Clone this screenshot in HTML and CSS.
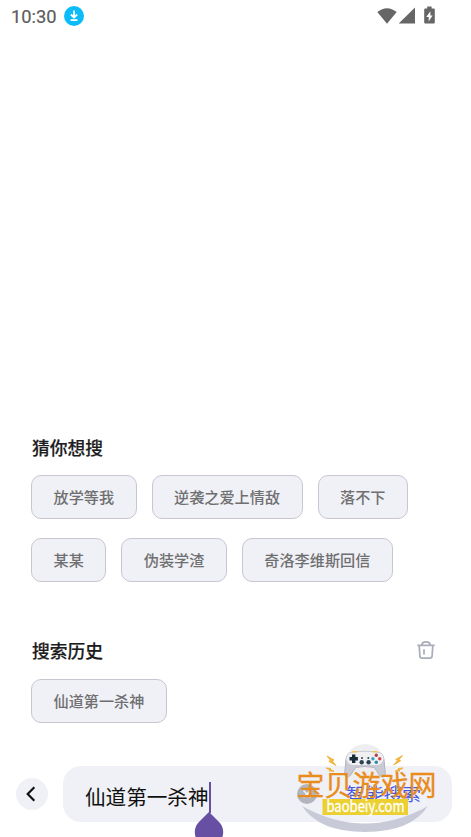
FILE: index.html
```html
<!DOCTYPE html>
<html lang="zh-CN">
<head>
<meta charset="utf-8">
<meta name="viewport" content="width=device-width, initial-scale=1">
<title>搜索</title>
<link rel="stylesheet" href="styles.css">
</head>
<body>
<div class="screen">
  <header class="status">
    <span class="clock">10:30</span>
    <svg class="download" viewBox="0 0 20 20"><circle cx="10" cy="10" r="10" fill="#0bbcf9"/><path d="M10 4.400v7M6.900 8.500L10 11.600l3.100-3.100M6.600 14.200h6.800" fill="none" stroke="#fff" stroke-width="1.800"/></svg>
    <svg class="signals" viewBox="0 0 60 20"><g fill="#666"><path d="M.3 6.100Q10 -1.500 19.700 6.100L10 17.700Z"/><path d="M38 1.600v16H21.700Z"/><path d="M50.200.6h4.400v1.800h2.200q1 0 1 1v13.200q0 1-1 1h-8.600q-1 0-1-1V3.400q0-1 1-1h2Z"/></g><path d="M53.400 5.200L49.200 11h2.500v4.400L55.600 9.400h-2.200Z" fill="#fff"/></svg>
  </header>
  <main class="content">
    <section class="suggest">
      <h2>猜你想搜</h2>
      <div class="chips">
        <button>放学等我</button><button>逆袭之爱上情敌</button><button>落不下</button><button>某某</button><button>伪装学渣</button><button>奇洛李维斯回信</button>
      </div>
    </section>
    <section class="history">
      <div class="heading"><h2>搜索历史</h2>
        <svg class="trash" viewBox="0 0 20 20" fill="none" stroke="#a9acb9" stroke-width="1.700"><path d="M1.300 5.400h17.400M5.800 5.200C6 .7 14 .7 14.200 5.200M3.200 5.600l.7 10.600q.2 2 2.200 2h7.800q2 0 2.200-2l.7-10.600M8 9.300v5.200"/></svg>
      </div>
      <div class="chips"><button>仙道第一杀神</button></div>
    </section>
  </main>
  <footer class="searchbar">
    <button class="back" aria-label="返回"><svg viewBox="0 0 32 32"><path d="M18.300 9.300L11.700 16l6.600 6.700" fill="none" stroke="#111" stroke-width="2.200"/></svg></button>
    <div class="field">
      <span class="query">仙道第一杀神</span>
      <svg class="clear" viewBox="0 0 20 20"><circle cx="10" cy="10" r="10" fill="#b2b4be"/><path d="M6.500 6.500l7 7m0-7l-7 7" stroke="#f2f3f7" stroke-width="1.600"/></svg>
      <span class="submit">智能搜索</span>
    </div>
  </footer>
  <div class="caret"></div>
  <svg class="handle" viewBox="0 0 30 26"><path d="M15 0L24.800 9.800A14.200 14.200 0 1 1 5.200 9.800Z" fill="#6750a4"/></svg>
  <svg class="watermark" viewBox="290 737 160 100">
    <circle cx="365" cy="764" r="20" fill="#eeeef0"/>
    <path d="M302 806Q365 841 428 806Q411 832 365 832Q319 832 302 806Z" fill="#c9cad7"/>
    <path d="M352 752.500q13-2.500 26 0c4 .5 5.500 3 6 7l1.300 13c.5 5-3.300 6-6 2.500l-5-7.500q-9.300-2-18.600 0l-5 7.500c-2.700 3.500-6.500 2.500-6-2.500l1.300-13c.5-4 2-6.500 6-7Z" fill="#c9cad4" stroke="#a9abba" stroke-width=".8"/>
    <path d="M352 752.500q13-2 26 0c5 1 6.500 5 5 8.500q-2 4.500-7.500 4h-21q-5.500 .5-7.500-4c-1.500-3.500 0-7.500 5-8.500Z" fill="#f0f0f3"/>
    <path d="M352.300 751.700h5M372.500 751.700h5" stroke="#f2c34e" stroke-width="1.600"/>
    <path d="M353.700 754.500v8.500M349.500 758.800h8.400" stroke="#172b3b" stroke-width="3.400"/>
    <g fill="#2b4653"><circle cx="361.700" cy="762.300" r="2.200"/><circle cx="368.600" cy="762.300" r="2.200"/><circle cx="362" cy="758" r="1"/><circle cx="368.300" cy="758" r="1"/></g>
    <g><circle cx="376.300" cy="755.300" r="1.700" fill="#b34050"/><circle cx="372.900" cy="758.800" r="1.700" fill="#3a9fc4"/><circle cx="379.700" cy="758.800" r="1.700" fill="#d74444"/><circle cx="376.300" cy="762.300" r="1.700" fill="#2b8ba9"/></g>
    <path d="M327 756l7 4-2 .7 4 4.800-7.200-4.200 2-.7ZM402.500 755.500l-6.800 4 2 .7-4 4.800 7-4.200-2-.7ZM326 768l5 .5-1 .8 4 2-5-.4 1-.9ZM403 768l-5 .5 1 .8-4 2 5-.4-1-.9Z" fill="#f7bd35" stroke="#eda82d" stroke-width=".8"/>
    <text class="brand" x="296.500" y="796" textLength="140">宝贝游戏网</text>
    <rect x="322.500" y="799" width="85.500" height="16" fill="#ecd02f"/>
    <text class="domain" x="326.500" y="811.500" textLength="78" lengthAdjust="spacingAndGlyphs">baobeiy.com</text>
  </svg>
</div>
</body>
</html>
```
FILE: styles.css
```css
* { box-sizing: border-box; }
body { margin: 0; background: #fff; font-family: "Noto Sans CJK SC", sans-serif; }
button { font: inherit; margin: 0; }
svg { display: block; }
.screen { position: relative; display: flex; flex-direction: column; height: 837px; overflow: hidden; }
.status { display: flex; align-items: center; height: 32px; padding: 0 34px 0 11px; }
.clock { font: 400 18.300px Roboto, sans-serif; color: #5c5c5c; width: 53px; -webkit-text-stroke: .2px #5c5c5c; }
.download { width: 20px; height: 20px; }
.signals { width: 60px; height: 20px; margin-left: auto; }
.content { flex: 1; padding: 402px 32px 0 31px; }
h2 { margin: 0; font-size: 17.800px; font-weight: 500; line-height: 26px; color: #1c1c1e; padding-left: 1px; -webkit-text-stroke: .2px #1c1c1e; }
.chips { display: flex; flex-wrap: wrap; gap: 19px 15px; margin-top: 15px; }
.chips button { height: 44px; padding: 0 21.500px 2px; border: 1px solid #cac6d0; border-radius: 10px; background: #f0f1f6; color: #6f6f71; font-size: 15.150px; font-weight: 500; white-space: nowrap; }
.history { margin-top: 55px; }
.heading { display: flex; justify-content: space-between; align-items: center; }
.history .chips { margin-top: 16px; }
.trash { width: 20px; height: 20px; margin-right: 3px; }
.searchbar { display: flex; align-items: center; height: 56px; margin: 0 19px 15px 16px; gap: 15px; }
.back { width: 32px; height: 32px; border: 0; border-radius: 50%; padding: 0; background: #f0f1f6; }
.back svg { width: 32px; height: 32px; }
.field { flex: 1; display: flex; align-items: center; height: 56px; padding: 0 31px 0 22px; border-radius: 18px; background: #f0f1f6; }
.query { font-size: 20.600px; color: #111; padding-top: 4px; }
.clear { width: 20px; height: 20px; margin: 0 29px 0 auto; }
.submit { font-size: 18.700px; color: #4458df; padding-bottom: 4px; }
.caret { position: absolute; left: 209px; top: 782px; width: 2px; height: 31px; background: #6750a4; }
.handle { position: absolute; left: 194px; top: 812px; width: 30px; height: 26px; }
.watermark { position: absolute; left: 290px; top: 737px; width: 160px; height: 100px; }
.brand { font: 400 28px "Noto Sans CJK SC", sans-serif; fill: #e98c1c; stroke: #e98c1c; stroke-width: .3px; }
.domain { font: 400 15.500px "Noto Sans CJK SC", sans-serif; fill: #fff; stroke: #fff; stroke-width: .3px; }
```
